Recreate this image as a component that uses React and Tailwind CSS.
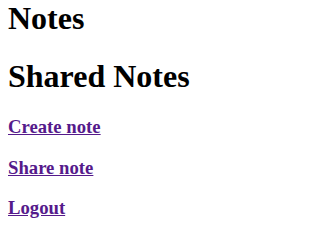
export default function App() {
  return (
    <div className="px-2 text-black bg-white" style={{}}>
      <div className="font-['Liberation_Serif',serif]">
        <h1 className="text-[32px] font-bold leading-[1.15] m-0">Notes</h1>
        <h1 className="text-[32px] font-bold leading-[1.15] mt-[21.44px] mb-[21.44px]">Shared Notes</h1>
        <h3 className="text-[18.72px] font-bold leading-[1.15] my-[18.72px]">
          <a href="#" className="text-[#551a8b] underline">Create note</a>
        </h3>
        <h3 className="text-[18.72px] font-bold leading-[1.15] my-[18.72px]">
          <a href="#" className="text-[#551a8b] underline">Share note</a>
        </h3>
        <h3 className="text-[18.72px] font-bold leading-[1.15] my-[18.72px]">
          <a href="#" className="text-[#551a8b] underline">Logout</a>
        </h3>
      </div>
    </div>
  );
}
